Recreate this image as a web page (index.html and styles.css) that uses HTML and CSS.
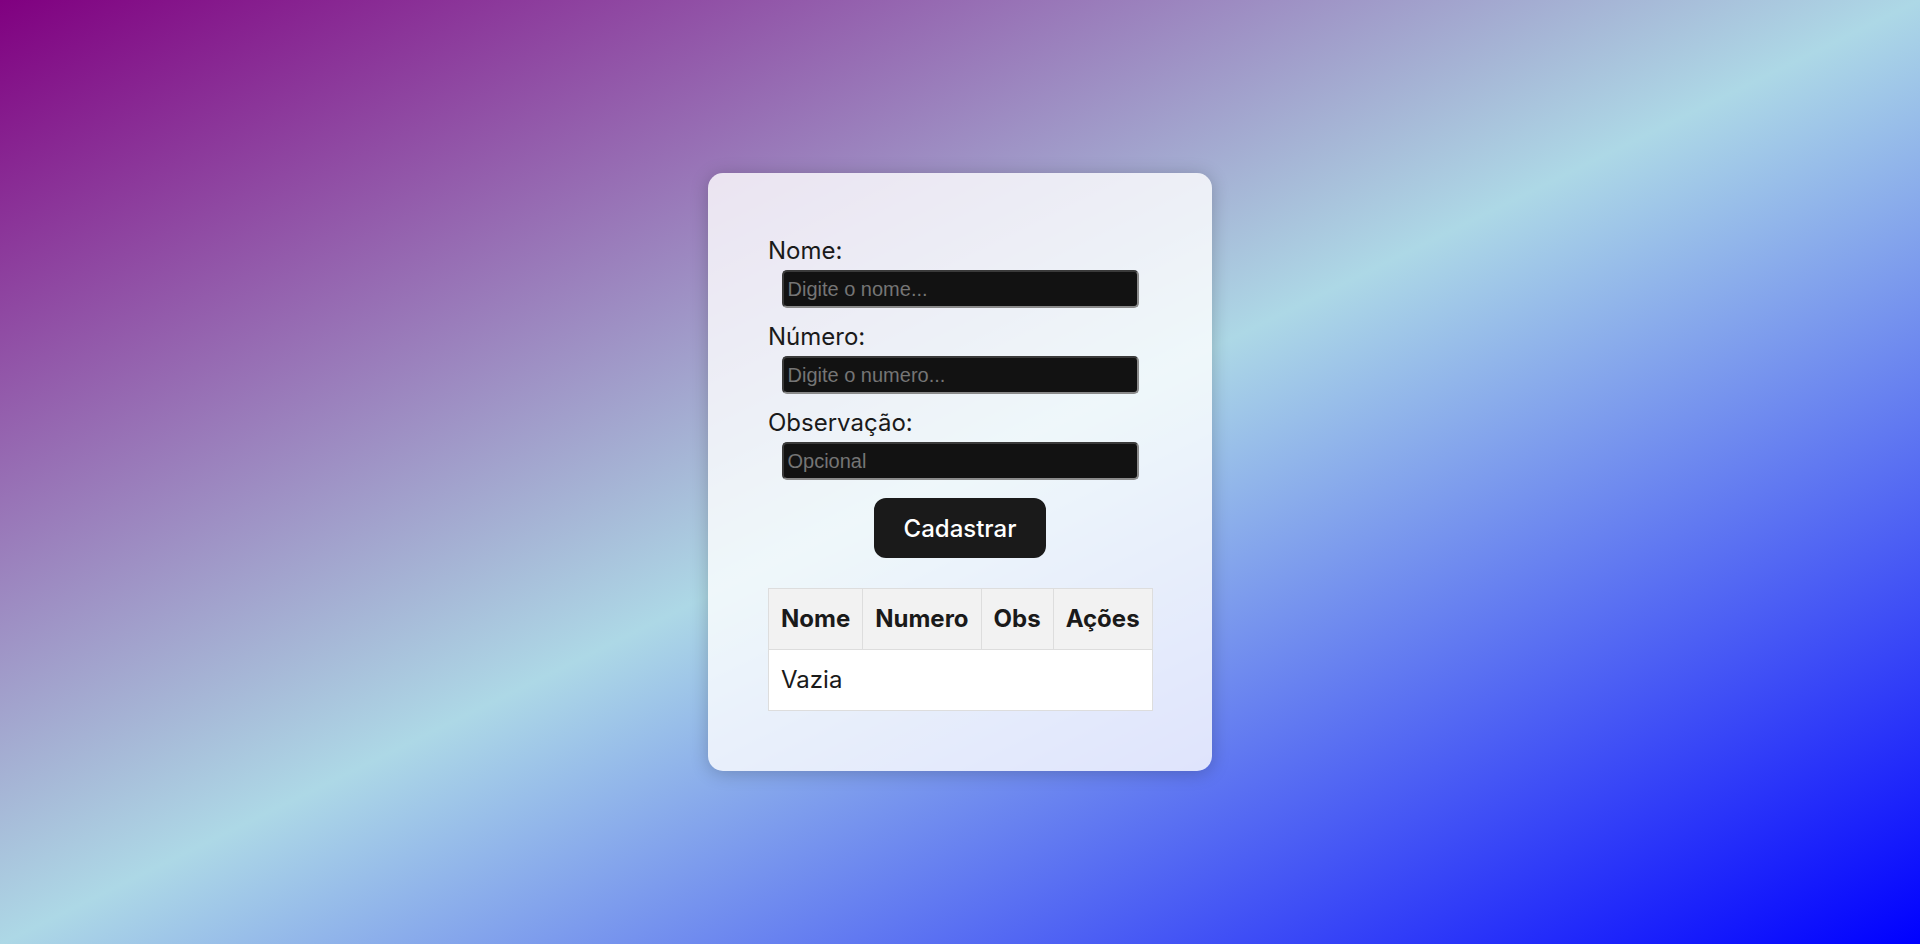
FILE: index.html
```html
<!DOCTYPE html>
<html lang="pt-BR">
<head>
<meta charset="utf-8">
<title>Cadastro</title>
<link rel="stylesheet" href="styles.css">
</head>
<body>
  <main class="card">
    <form class="form">
      <label class="label" for="nome">Nome:</label>
      <input class="field" id="nome" type="text" placeholder="Digite o nome...">
      <label class="label" for="numero">Número:</label>
      <input class="field" id="numero" type="text" placeholder="Digite o numero...">
      <label class="label" for="obs">Observação:</label>
      <input class="field" id="obs" type="text" placeholder="Opcional">
      <button class="btn" type="button">Cadastrar</button>
    </form>
    <table class="table">
      <thead>
        <tr><th>Nome</th><th>Numero</th><th>Obs</th><th>Ações</th></tr>
      </thead>
      <tbody>
        <tr><td colspan="4">Vazia</td></tr>
      </tbody>
    </table>
  </main>
</body>
</html>
```

FILE: styles.css
```css
html, body {
  margin: 0;
  height: 100%;
}

body {
  display: flex;
  align-items: center;
  justify-content: center;
  background: linear-gradient(to bottom right, #800080, #add8e6, #0000ff);
  font-family: Inter, "Noto Sans", sans-serif;
  font-size: 24px;
  line-height: 1.5;
  color: #1a1a1a;
}

.card {
  box-sizing: border-box;
  width: 504px;
  padding: 60px;
  border-radius: 15px;
  background: rgba(255, 255, 255, 0.8);
  box-shadow: 0 2px 18px rgba(0, 0, 0, 0.22);
}

.form {
  display: flex;
  flex-direction: column;
}

.label {
  display: block;
  line-height: 36px;
}

.field {
  box-sizing: border-box;
  width: 357px;
  height: 38px;
  margin: 1px auto 11px;
  padding: 5px 4px;
  border-width: 2px;
  border-style: solid;
  border-color: #3a3a3a #8a8a8a #8a8a8a #3a3a3a;
  border-radius: 5px;
  background: #121212;
  color: #eee;
  font-family: "Liberation Sans", Arial, sans-serif;
  font-size: 20px;
}

.field::placeholder {
  color: #757575;
}

.btn {
  align-self: center;
  margin-top: 7px;
  padding: 14.4px 28.8px;
  border: 1px solid transparent;
  border-radius: 12px;
  background: #1a1a1a;
  color: #fff;
  font-family: Inter, "Noto Sans", sans-serif;
  font-size: 24px;
  font-weight: 500;
  line-height: normal;
  cursor: pointer;
}

.table {
  width: 100%;
  margin-top: 30px;
  border-collapse: collapse;
  background: #fff;
}

.table th,
.table td {
  padding: 12px;
  border: 1px solid #ddd;
  text-align: left;
}

.table th {
  background: #f2f2f2;
  font-weight: 700;
}
```
